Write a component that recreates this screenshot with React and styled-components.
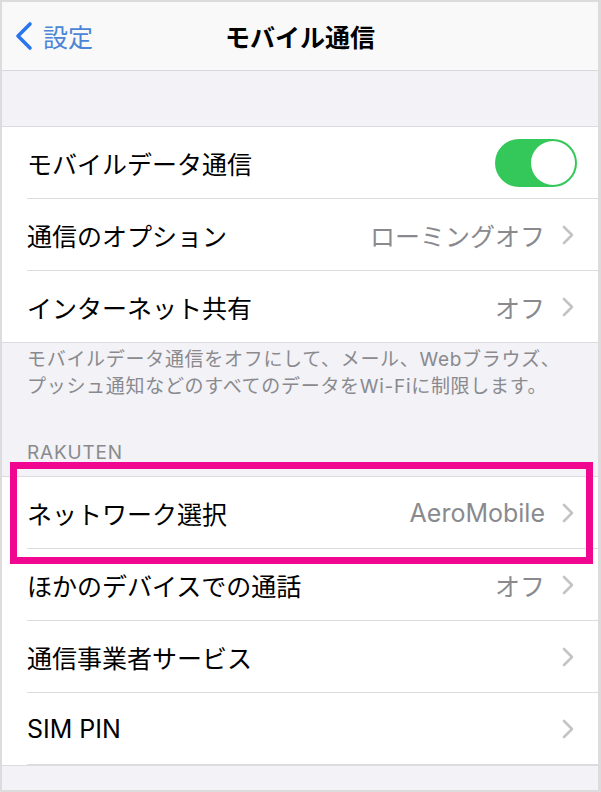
import styled, { createGlobalStyle } from 'styled-components';

const GlobalStyle = createGlobalStyle`
  html, body {
    margin: 0;
    padding: 0;
    background: #fff;
  }
  body {
    font-family: 'Inter', 'Noto Sans CJK JP', sans-serif;
  }
`;

const Frame = styled.div`
  box-sizing: border-box;
  width: 601px;
  height: 792px;
  border: 2px solid #dcdcdc;
  border-right-width: 3px;
  background: #f2f2f7;
  overflow: hidden;
`;

const NavBar = styled.div`
  display: grid;
  grid-template-columns: 1fr auto 1fr;
  align-items: center;
  height: 68px;
  background: #f9f9f9;
  border-bottom: 1px solid #d8d8dc;
`;

const BackButton = styled.div`
  display: flex;
  align-items: center;
  gap: 8px;
  padding-left: 11px;
  color: #4a85d6;
  font-size: 25px;
`;

const Title = styled.div`
  font-size: 25px;
  font-weight: 700;
  color: #000;
`;

const Spacer = styled.div`
  height: 55px;
`;

const Group = styled.div`
  position: relative;
  background: #fff;
  border-top: 1px solid #dcdce0;
  border-bottom: 1px solid #dcdce0;
`;

const Row = styled.div`
  padding-left: 25px;

  &:last-child > div {
    border-bottom: none;
  }
`;

const RowInner = styled.div`
  display: flex;
  align-items: center;
  height: 71px;
  padding-right: ${(p) => (p.$toggle ? '21px' : '24px')};
  border-bottom: 1px solid #dcdce0;
`;

const Label = styled.div`
  flex: 1;
  font-size: 25px;
  color: #000;
`;

const Value = styled.div`
  font-size: 25px;
  color: #8a8a8e;
`;

const Chevron = styled.svg`
  margin-left: 17px;
  flex: none;
`;

const Toggle = styled.div`
  display: flex;
  justify-content: flex-end;
  box-sizing: border-box;
  width: 82px;
  height: 48px;
  padding: 2px;
  border-radius: 24px;
  background: #34c759;
`;

const Knob = styled.div`
  width: 44px;
  height: 44px;
  border-radius: 50%;
  background: #fff;
`;

const Footer = styled.div`
  padding: 3px 25px 0;
  font-size: 19px;
  line-height: 27px;
  letter-spacing: 0.7px;
  color: #8a8a8e;
`;

const SectionHeader = styled.div`
  margin-top: 41px;
  padding: 0 25px 11px;
  font-size: 19px;
  line-height: 24px;
  color: #8a8a8e;
  letter-spacing: 0.8px;
`;

const Highlight = styled.div`
  position: absolute;
  top: -15px;
  left: 8px;
  box-sizing: border-box;
  width: 583px;
  height: 102px;
  border: 7px solid #f1068f;
  pointer-events: none;
`;

const ChevronRight = () => (
  <Chevron width="12" height="20" viewBox="0 0 12 20">
    <polyline
      points="2,2 10,10 2,18"
      fill="none"
      stroke="#c4c4c7"
      strokeWidth="2.6"
      strokeLinecap="round"
      strokeLinejoin="round"
    />
  </Chevron>
);

const SettingRow = ({ label, value, chevron = true, children }) => (
  <Row>
    <RowInner $toggle={!!children}>
      <Label>{label}</Label>
      {value && <Value>{value}</Value>}
      {children}
      {!children && chevron && <ChevronRight />}
    </RowInner>
  </Row>
);

const App = () => (
  <>
    <GlobalStyle />
    <Frame>
      <NavBar>
        <BackButton>
          <svg width="22" height="30" viewBox="0 0 22 30">
            <polyline
              points="17,3 5,15 17,27"
              fill="none"
              stroke="#2a74ec"
              strokeWidth="3.6"
              strokeLinecap="round"
              strokeLinejoin="round"
            />
          </svg>
          設定
        </BackButton>
        <Title>モバイル通信</Title>
        <div />
      </NavBar>
      <Spacer />
      <Group>
        <SettingRow label="モバイルデータ通信">
          <Toggle>
            <Knob />
          </Toggle>
        </SettingRow>
        <SettingRow label="通信のオプション" value="ローミングオフ" />
        <SettingRow label="インターネット共有" value="オフ" />
      </Group>
      <Footer>
        モバイルデータ通信をオフにして、メール、Webブラウズ、
        <br />
        プッシュ通知などのすべてのデータをWi-Fiに制限します。
      </Footer>
      <SectionHeader>RAKUTEN</SectionHeader>
      <Group>
        <SettingRow label="ネットワーク選択" value="AeroMobile" />
        <SettingRow label="ほかのデバイスでの通話" value="オフ" />
        <SettingRow label="通信事業者サービス" />
        <SettingRow label="SIM PIN" />
        <Highlight />
      </Group>
    </Frame>
  </>
);

export default App;
